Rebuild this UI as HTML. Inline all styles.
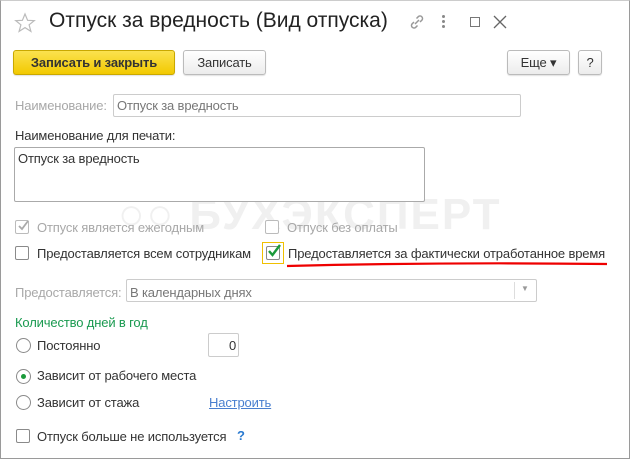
<!DOCTYPE html>
<html><head><meta charset="utf-8"><style>
*{margin:0;padding:0;box-sizing:border-box}
body{width:631px;height:460px;background:#fff;font-family:"Liberation Sans",Arial,sans-serif;font-size:13px;letter-spacing:-0.15px;color:#333;position:relative;overflow:hidden}
.a{position:absolute;white-space:nowrap}
.win{position:absolute;left:0;top:0;width:630px;height:459px;border:1px solid #9a9a9a;border-top-color:#ccc}
.btn{position:absolute;height:25px;border:1px solid #bbb;border-radius:3px;background:linear-gradient(#fff,#ececec);text-align:center;line-height:23px;color:#333;box-shadow:0 1px 1px rgba(0,0,0,.12)}
.inp{position:absolute;border:1px solid #ccc;border-radius:2px;background:#fff}
.cb{position:absolute;width:14px;height:14px;border:1px solid #8a8a8a;border-radius:2px;background:#fff}
.rb{position:absolute;width:15px;height:15px;border:1px solid #8a8a8a;border-radius:50%;background:#fff}
.g{color:#a8a8a8}
</style></head><body>
<div class="win"></div>
<div class="a" style="left:118px;top:190px;font-size:44px;font-weight:bold;color:#f0f0f0;letter-spacing:2px">○○ БУХЭКСПЕРТ</div>
<svg class="a" style="left:14px;top:12px" width="22" height="22" viewBox="0 0 22 22"><polygon points="11,2 13.6,8.3 20.3,8.6 15.1,12.8 16.9,19.4 11,15.6 5.1,19.4 6.9,12.8 1.7,8.6 8.4,8.3" fill="none" stroke="#bbb" stroke-width="1.2"/></svg>
<div class="a" style="left:49px;top:9px;font-size:21px;color:#222;letter-spacing:0">Отпуск за вредность (Вид отпуска)</div>
<svg class="a" style="left:408px;top:13px" width="18" height="18" viewBox="0 0 18 18" fill="none" stroke="#999" stroke-width="1.5"><path d="M7 11l4-4M6 9l-2 2a2.5 2.5 0 003.5 3.5l2-2M12 9l2-2a2.5 2.5 0 00-3.5-3.5l-2 2"/></svg>
<div class="a" style="left:442px;top:15px;width:3px;height:3px;background:#888;border-radius:50%;box-shadow:0 5px 0 #888,0 10px 0 #888"></div>
<div class="a" style="left:470px;top:17px;width:10px;height:10px;border:1.3px solid #777"></div>
<svg class="a" style="left:493px;top:15px" width="14" height="14"><path d="M1 1L13 13M13 1L1 13" stroke="#666" stroke-width="1.3"/></svg>
<div class="btn" style="left:13px;top:50px;width:162px;background:linear-gradient(#fbe24f,#f2c900);border-color:#c9a800;font-weight:bold;color:#333">Записать и закрыть</div>
<div class="btn" style="left:183px;top:50px;width:83px">Записать</div>
<div class="btn" style="left:507px;top:50px;width:63px">Еще ▾</div>
<div class="btn" style="left:578px;top:50px;width:24px">?</div>
<div class="a g" style="left:15px;top:98px">Наименование:</div>
<div class="inp" style="left:113px;top:94px;width:408px;height:23px"></div>
<div class="a" style="left:117px;top:98px;color:#777">Отпуск за вредность</div>
<div class="a" style="left:15px;top:128px">Наименование для печати:</div>
<div class="inp" style="left:14px;top:147px;width:411px;height:55px;border-color:#aaa"></div>
<div class="a" style="left:18px;top:151px">Отпуск за вредность</div>
<div class="cb" style="left:15px;top:220px;border-color:#bbb"></div>
<svg class="a" style="left:16px;top:219px" width="14" height="14"><path d="M3 7l3 3 6-8" stroke="#aaa" stroke-width="1.8" fill="none"/></svg>
<div class="a g" style="left:37px;top:220px">Отпуск является ежегодным</div>
<div class="cb" style="left:265px;top:220px;border-color:#bbb"></div>
<div class="a g" style="left:287px;top:220px">Отпуск без оплаты</div>
<div class="cb" style="left:15px;top:246px"></div>
<div class="a" style="left:37px;top:246px">Предоставляется всем сотрудникам</div>
<div class="a" style="left:262px;top:242px;width:22px;height:22px;border:1px solid #f0c000"></div>
<div class="cb" style="left:266px;top:246px"></div>
<svg class="a" style="left:266px;top:243px" width="16" height="16"><path d="M3 8l3.5 4L14 2" stroke="#1a9a3a" stroke-width="2.4" fill="none"/></svg>
<div class="a" style="left:288px;top:246px">Предоставляется за фактически отработанное время</div>
<svg class="a" style="left:285px;top:261px" width="325" height="8"><path d="M2 5 Q160 1 322 3" stroke="#e00" stroke-width="2.2" fill="none"/></svg>
<div class="a g" style="left:15px;top:285px">Предоставляется:</div>
<div class="inp" style="left:126px;top:279px;width:411px;height:23px"></div>
<div class="a" style="left:130px;top:285px;color:#777">В календарных днях</div>
<div class="a" style="left:514px;top:282px;width:1px;height:17px;background:#ddd"></div>
<div class="a" style="left:521px;top:284px;font-size:8px;color:#999">▼</div>
<div class="a" style="left:15px;top:315px;color:#1a9a50">Количество дней в год</div>
<div class="rb" style="left:16px;top:338px"></div>
<div class="a" style="left:37px;top:338px">Постоянно</div>
<div class="inp" style="left:208px;top:333px;width:31px;height:24px"></div>
<div class="a" style="left:229px;top:338px">0</div>
<div class="rb" style="left:16px;top:369px"></div>
<div class="a" style="left:21px;top:374px;width:5px;height:5px;border-radius:50%;background:#1a9a3a"></div>
<div class="a" style="left:37px;top:368px">Зависит от рабочего места</div>
<div class="rb" style="left:16px;top:395px"></div>
<div class="a" style="left:37px;top:395px">Зависит от стажа</div>
<div class="a" style="left:209px;top:395px;color:#4a7fcf;text-decoration:underline">Настроить</div>
<div class="cb" style="left:16px;top:429px"></div>
<div class="a" style="left:37px;top:429px">Отпуск больше не используется</div>
<div class="a" style="left:237px;top:428px;color:#2a7ad0;font-weight:bold">?</div>
</body></html>
